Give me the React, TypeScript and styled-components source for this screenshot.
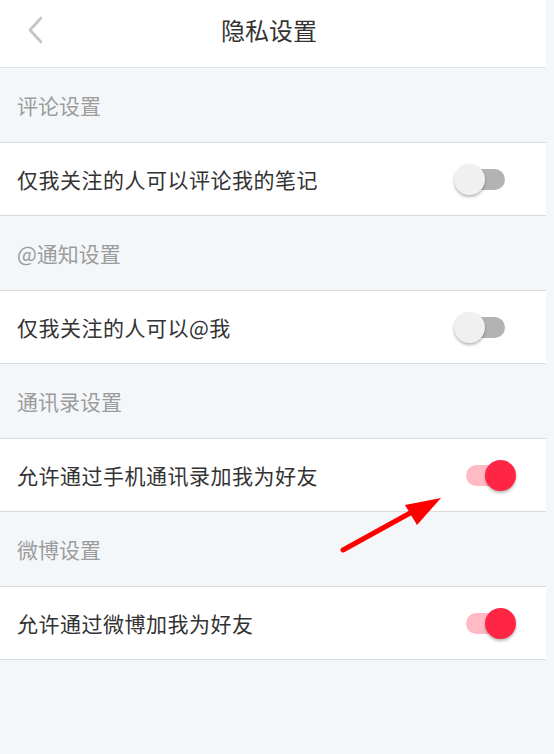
import * as React from 'react';
import styled, { createGlobalStyle } from 'styled-components';

const GlobalStyle = createGlobalStyle`
    html, body {
        margin: 0;
        padding: 0;
        background: #f4f7fa;
    }
    body {
        font-family: 'Noto Sans CJK SC', 'Noto Sans', sans-serif;
        width: 554px;
        min-height: 754px;
    }
`;

type Setting = {
    section: string;
    label: string;
    on: boolean;
};

const settings: Setting[] = [
    { section: '评论设置', label: '仅我关注的人可以评论我的笔记', on: false },
    { section: '@通知设置', label: '仅我关注的人可以@我', on: false },
    { section: '通讯录设置', label: '允许通过手机通讯录加我为好友', on: true },
    { section: '微博设置', label: '允许通过微博加我为好友', on: true },
];

const Screen = styled.div`
    position: relative;
    width: 546px;
    min-height: 754px;
    background: #f4f7fa;
`;

// three column bar: back button | centred title | empty slot
const NavBar = styled.header`
    display: grid;
    grid-template-columns: 1fr auto 1fr;
    align-items: center;
    height: 68px;
    padding-bottom: 8px;
    box-sizing: border-box;
    background: #ffffff;
    border-bottom: 1px solid #e2e2e2;
`;

const BackButton = styled.button`
    justify-self: start;
    margin-left: 22px;
    width: 28px;
    height: 36px;
    padding: 0;
    border: none;
    background: none;
    display: flex;
    align-items: center;
    justify-content: center;
`;

const Title = styled.h1`
    margin: 0 8px 0 0;
    font-size: 24px;
    font-weight: 400;
    color: #333333;
`;

const SectionTitle = styled.div`
    display: flex;
    align-items: center;
    height: 74px;
    padding-left: 17px;
    font-size: 21px;
    color: #9c9c9c;
`;

const Row = styled.div`
    display: flex;
    align-items: center;
    justify-content: space-between;
    height: 72px;
    padding: 0 30px 0 17px;
    background: #ffffff;
    border-top: 1px solid #dadada;
    border-bottom: 1px solid #dadada;
`;

const RowLabel = styled.span`
    font-size: 21px;
    color: #333333;
    letter-spacing: 0.5px;
`;

const SwitchBox = styled.div`
    display: flex;
    align-items: center;
    width: 62px;
    height: 31px;
`;

const Track = styled.div<{ $on: boolean }>`
    display: flex;
    align-items: center;
    justify-content: ${p => (p.$on ? 'flex-end' : 'flex-start')};
    width: 39px;
    height: 21px;
    margin: 0 11px 0 12px;
    border-radius: 11px;
    background: ${p => (p.$on ? '#ffbac5' : '#b3b3b3')};
`;

// knob hangs past the track ends by negative margins
const Knob = styled.div<{ $on: boolean }>`
    flex-shrink: 0;
    width: 31px;
    height: 31px;
    margin: ${p => (p.$on ? '0 -11px 0 0' : '0 0 0 -12px')};
    border-radius: 50%;
    background: ${p => (p.$on ? '#ff2544' : '#f0f0f0')};
    box-shadow: 0 2px 3px rgba(0, 0, 0, 0.28);
`;

const Pointer = styled.svg`
    position: absolute;
    left: 330px;
    top: 485px;
    pointer-events: none;
`;

const Switch = ({ on }: { on: boolean }) => (
    <SwitchBox>
        <Track $on={on}>
            <Knob $on={on} />
        </Track>
    </SwitchBox>
);

export default function App() {
    return (
        <Screen>
            <GlobalStyle />
            <NavBar>
                <BackButton aria-label="返回">
                    <svg width="20" height="30" viewBox="0 0 20 30">
                        <polyline
                            points="15,3 4,15 15,27"
                            fill="none"
                            stroke="#c4c4c4"
                            strokeWidth="2.6"
                            strokeLinecap="round"
                            strokeLinejoin="round"
                        />
                    </svg>
                </BackButton>
                <Title>隐私设置</Title>
                <span />
            </NavBar>
            {settings.map(s => (
                <React.Fragment key={s.section}>
                    <SectionTitle>{s.section}</SectionTitle>
                    <Row>
                        <RowLabel>{s.label}</RowLabel>
                        <Switch on={s.on} />
                    </Row>
                </React.Fragment>
            ))}
            {/* red pointer arrow */}
            <Pointer width="120" height="80" viewBox="0 0 120 80">
                <line x1="13" y1="65" x2="82" y2="27" stroke="#ff0000" strokeWidth="5" strokeLinecap="round" />
                <polygon points="111,13 75,20 87,40" fill="#ff0000" />
            </Pointer>
        </Screen>
    );
}
